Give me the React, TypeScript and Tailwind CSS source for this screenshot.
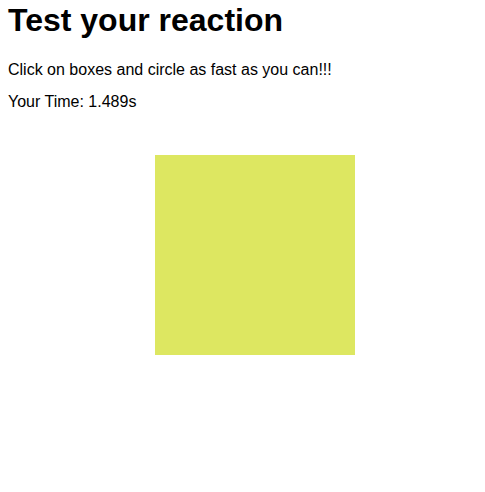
export default function App() {
  return (
    <div className="min-h-screen bg-white px-2 text-black" style={{ fontFamily: '"Liberation Sans", Arial, sans-serif' }}>
      <h1 className="pt-[2px] text-[32px] font-bold leading-[37px]">Test your reaction</h1>
      <p className="mt-[22px] text-[16px] leading-[18px]">Click on boxes and circle as fast as you can!!!</p>
      <p className="mt-[14px] text-[16px] leading-[18px]">Your Time: 1.489s</p>
      <div className="ml-[147px] mt-[44px] h-[200px] w-[200px] bg-[#dde761]" />
    </div>
  );
}
